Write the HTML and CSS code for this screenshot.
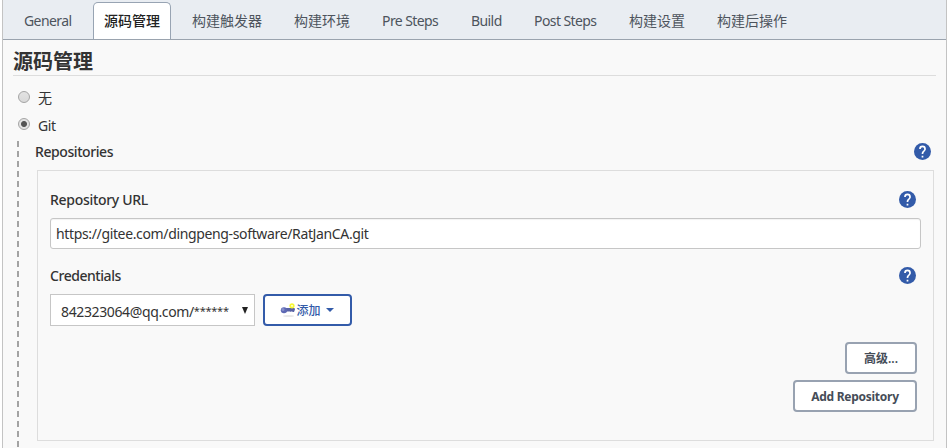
FILE: index.html
```html
<!DOCTYPE html>
<html lang="zh-CN">
<head>
<meta charset="utf-8">
<title>源码管理</title>
<link rel="stylesheet" href="styles.css">
</head>
<body>
<svg class="defs" width="0" height="0" aria-hidden="true">
  <symbol id="help" viewBox="2 2 20 20"><path fill="#335ba9" d="M12 2a10 10 0 1 0 0 20 10 10 0 0 0 0-20z"/><path fill="#fff" d="M13 19h-2v-2h2v2zm2.070-7.750-.9.920C13.450 12.900 13 13.500 13 15h-2v-.5c0-1.100.45-2.100 1.170-2.830l1.240-1.260c.37-.36.59-.86.59-1.410a2 2 0 0 0-4 0H8a4 4 0 0 1 8 0c0 .88-.36 1.680-.93 2.250z"/></symbol>
</svg>
<main class="panel">
  <nav class="tabs">
    <a class="tab general">General</a>
    <a class="tab active">源码管理</a>
    <a class="tab">构建触发器</a>
    <a class="tab">构建环境</a>
    <a class="tab pre">Pre Steps</a>
    <a class="tab build">Build</a>
    <a class="tab post">Post Steps</a>
    <a class="tab">构建设置</a>
    <a class="tab">构建后操作</a>
  </nav>
  <section class="content">
    <h1>源码管理</h1>
    <label class="choice none"><i class="radio"></i><span>无</span></label>
    <label class="choice"><i class="radio on"></i><span class="git">Git</span></label>
    <div class="scm">
      <div class="rail"></div>
      <div class="scm-body">
        <div class="row repos"><b class="t-repos">Repositories</b><svg class="help"><use href="#help"/></svg></div>
        <div class="box">
          <div class="row"><b class="t-url">Repository URL</b><svg class="help"><use href="#help"/></svg></div>
          <div class="input"><span class="url">https://gitee.com/dingpeng-software/RatJanCA.git</span></div>
          <div class="row cred"><b class="t-cred">Credentials</b><svg class="help"><use href="#help"/></svg></div>
          <div class="controls">
            <div class="select"><span class="account">842323064@qq.com/<span class="stars">******</span></span><svg width="6" height="7"><path d="M0 0h6L3 7z" fill="#222"/></svg></div>
            <div class="button add">
              <svg class="key" width="16" height="16" viewBox="0 0 16 16"><ellipse cx="8.500" cy="14" rx="5.500" ry="1" fill="#e8e8e8"/><path d="M6 6h8.500l.5 1.500-1 2.500h-1.500L12 9l-1 1-1-.4H6z" fill="#5963a5"/><ellipse cx="4" cy="8.200" rx="3.200" ry="3" fill="#5d68b4"/><circle cx="3" cy="7.400" r="1.500" fill="#8790ca"/><circle cx="12" cy="3.800" r="2.600" fill="#f7f735"/><circle cx="12" cy="3.800" r=".9" fill="#fff"/></svg>
              <span>添加</span>
              <svg class="caret" width="8" height="4"><path d="M0 0h8L4 4z" fill="#335ba9"/></svg>
            </div>
          </div>
          <div class="actions">
            <div class="button advanced"><span>高级...</span></div>
            <div class="button repo"><span>Add Repository</span></div>
          </div>
        </div>
      </div>
    </div>
  </section>
</main>
</body>
</html>
```

FILE: styles.css
```css
* { box-sizing: border-box; }
body { margin: 0; height: 448px; overflow: hidden; background: #fff; color: #333; font: 14px/20px "Noto Sans", "Noto Sans CJK SC", sans-serif; }
.defs { position: absolute; }
svg { display: block; flex: none; }
.panel { width: 945px; height: 448px; margin-left: 2px; border: solid #c3c3c3; border-width: 0 1px; background: #f9f9f9; overflow: hidden; }
.tabs { display: flex; gap: 10px; height: 40px; padding: 2px 0 0 10px; background: #e9edf2; border-bottom: 1px solid #9aa3ae; color: #4d545d; }
.tab { height: 37px; padding: 8px 10px; border: 1px solid transparent; border-bottom: 0; white-space: nowrap; font-family: "Noto Sans CJK SC", sans-serif; line-height: 19px; }
.tab.active { background: #fff; border-color: #98a4b3; border-radius: 5px 5px 0 0; font-weight: 500; color: #222; }
.general, .pre, .build, .post { font-family: "Noto Sans", sans-serif; letter-spacing: -.58px; line-height: 20px; }
.general { width: 70px; }
.pre { width: 79px; }
.build { width: 53px; }
.post { width: 85px; }
.content { padding: 9px 10px 0; }
h1 { height: 27px; margin: 0; border-bottom: 1px solid #ddd; font: 700 20px/23px "Noto Sans CJK SC", sans-serif; }
.choice { display: flex; align-items: flex-start; gap: 8px; height: 27px; padding-left: 5px; }
.choice.none { margin-top: 15px; height: 27px; }
.choice span { margin-top: -2px; }
.choice.none span { margin-top: -3px; }
.radio { width: 12px; height: 12px; border: 1px solid #a5a5a5; border-radius: 50%; background: linear-gradient(#e3e3e3, #d9d9d9); }
.radio.on { background: radial-gradient(circle, #555 0 2.500px, #e3e3e3 3.500px); }
.git { letter-spacing: -.4px; }
.scm { display: flex; padding-left: 4px; margin-top: -4px; }
.rail { width: 2px; height: 307px; background: repeating-linear-gradient(#a3a3a3 0 6px, transparent 6px 10px); }
.scm-body { width: 917px; padding-left: 16px; }
.row { display: flex; justify-content: space-between; height: 20px; }
.row b { font-weight: 500; }
.t-repos { letter-spacing: -.42px; }
.t-url { letter-spacing: -.3px; }
.t-cred { letter-spacing: -.45px; }
.url { letter-spacing: -.355px; }
.account { letter-spacing: -.37px; }
.stars { font-size: 11px; line-height: 1; letter-spacing: -.25px; vertical-align: 2px; }
.row.repos { padding: 1px 5.500px 0 0; height: 29px; }
.help { width: 17px; height: 17px; margin: .5px 0 0; }
.box { width: 897px; height: 271px; margin-left: 2px; padding: 19px 12px 0 12px; border: 1px solid #ddd; }
.box .row { padding-right: 5.500px; }
.input { height: 31px; width: 871px; margin-top: 8px; padding: 5px; border: 1px solid #c6c6c6; border-radius: 3px; background: #fff; box-shadow: inset 0 1px 1px #0000000d; line-height: 20px; }
.cred { margin-top: 17px; }
.controls { display: flex; gap: 8px; margin-top: 8px; }
.select { display: flex; justify-content: space-between; width: 205px; height: 32px; padding: 7px 6px 0 10px; border: 1px solid #c6c6c6; background: #fff; }
.select svg { margin: 5px 0 0; }
.button { display: flex; align-items: center; justify-content: center; height: 32px; border: 2px solid #98a2b1; border-radius: 4px; background: #fff; color: #454c57; font-size: 12px; font-weight: 700; }
.button span { position: relative; top: 1px; }
.add { width: 89px; border-color: #335ba9; color: #335ba9; font-weight: 500; }
.key { margin-left: -1px; }
.caret { margin-left: 5px; }
.actions { display: flex; flex-direction: column; align-items: flex-end; gap: 6px; margin: 16px 4px 0 0; }
.advanced { width: 72px; font-weight: 600; }
.repo { width: 124px; letter-spacing: -.27px; }
```
